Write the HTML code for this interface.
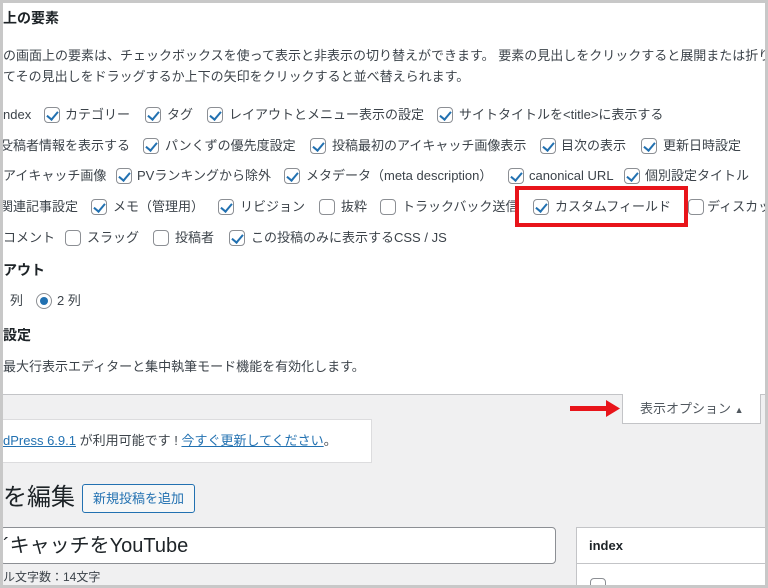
<!DOCTYPE html>
<html><head><meta charset="utf-8"><style>
*{margin:0;padding:0;box-sizing:border-box}
html,body{width:768px;height:588px;overflow:hidden;background:#f0f0f1}
body{font-family:"Liberation Sans","Noto Sans CJK JP",sans-serif;color:#3c434a;font-size:13px;position:relative}
.wrap{position:absolute;left:0;top:0;width:768px;height:588px;overflow:hidden}
.frame{position:absolute;left:0;top:0;width:768px;height:588px;border:3px solid #c8c8c8;pointer-events:none;z-index:10}
.panel{position:absolute;left:0;top:0;width:768px;height:395px;background:#fff;border-bottom:1px solid #c3c4c7}
.t{position:absolute;white-space:nowrap;line-height:18px}
.b{font-weight:bold;font-size:14px;color:#1d2327}
.cb{position:absolute;width:16px;height:16px;border:1px solid #8c8f94;border-radius:4px;background:#fff}
.cb.c::after{content:"";position:absolute;left:4px;top:1px;width:5px;height:9px;border:solid #2271b1;border-width:0 2px 2px 0;transform:rotate(40deg)}
.red{position:absolute;left:515px;top:186px;width:173px;height:41px;border:4px solid #e8141a}
</style></head><body><div class="wrap">
<div class="panel"></div>
<div class="t b" style="left:3px;top:9px">上の要素</div>
<div class="t" style="left:3px;top:47px;width:765px;overflow:hidden">の画面上の要素は、チェックボックスを使って表示と非表示の切り替えができます。 要素の見出しをクリックすると展開または折り</div>
<div class="t" style="left:3px;top:68px">てその見出しをドラッグするか上下の矢印をクリックすると並べ替えられます。</div>

<div class="t" style="left:3px;top:106px">ndex</div>
<div class="cb c" style="left:44px;top:107px"></div><div class="t" style="left:65px;top:106px">カテゴリー</div>
<div class="cb c" style="left:145px;top:107px"></div><div class="t" style="left:167px;top:106px">タグ</div>
<div class="cb c" style="left:207px;top:107px"></div><div class="t" style="left:229px;top:106px">レイアウトとメニュー表示の設定</div>
<div class="cb c" style="left:437px;top:107px"></div><div class="t" style="left:459px;top:106px">サイトタイトルを&lt;title&gt;に表示する</div>

<div class="t" style="left:0px;top:137px">殳稿者情報を表示する</div>
<div class="cb c" style="left:143px;top:138px"></div><div class="t" style="left:165px;top:137px">パンくずの優先度設定</div>
<div class="cb c" style="left:310px;top:138px"></div><div class="t" style="left:332px;top:137px">投稿最初のアイキャッチ画像表示</div>
<div class="cb c" style="left:540px;top:138px"></div><div class="t" style="left:561px;top:137px">目次の表示</div>
<div class="cb c" style="left:641px;top:138px"></div><div class="t" style="left:663px;top:137px">更新日時設定</div>

<div class="t" style="left:3px;top:167px">アイキャッチ画像</div>
<div class="cb c" style="left:116px;top:168px"></div><div class="t" style="left:137px;top:167px">PVランキングから除外</div>
<div class="cb c" style="left:284px;top:168px"></div><div class="t" style="left:306px;top:167px">メタデータ（meta description）</div>
<div class="cb c" style="left:508px;top:168px"></div><div class="t" style="left:529px;top:167px">canonical URL</div>
<div class="cb c" style="left:624px;top:168px"></div><div class="t" style="left:645px;top:167px">個別設定タイトル</div>

<div class="t" style="left:0px;top:198px">関連記事設定</div>
<div class="cb c" style="left:91px;top:199px"></div><div class="t" style="left:113px;top:198px">メモ（管理用）</div>
<div class="cb c" style="left:218px;top:199px"></div><div class="t" style="left:240px;top:198px">リビジョン</div>
<div class="cb" style="left:319px;top:199px"></div><div class="t" style="left:341px;top:198px">抜粋</div>
<div class="cb" style="left:380px;top:199px"></div><div class="t" style="left:402px;top:198px;width:113px;overflow:hidden">トラックバック送信</div>
<div class="cb c" style="left:533px;top:199px"></div><div class="t" style="left:555px;top:198px">カスタムフィールド</div>
<div class="cb" style="left:688px;top:199px"></div><div class="t" style="left:707px;top:198px;width:61px;overflow:hidden">ディスカッション</div>
<div class="red"></div>

<div class="t" style="left:3px;top:229px">コメント</div>
<div class="cb" style="left:65px;top:230px"></div><div class="t" style="left:87px;top:229px">スラッグ</div>
<div class="cb" style="left:153px;top:230px"></div><div class="t" style="left:175px;top:229px">投稿者</div>
<div class="cb c" style="left:229px;top:230px"></div><div class="t" style="left:251px;top:229px">この投稿のみに表示するCSS / JS</div>

<div class="t b" style="left:3px;top:261px">アウト</div>
<div class="t" style="left:10px;top:292px">列</div>
<div style="position:absolute;left:36px;top:293px;width:16px;height:16px;border:1px solid #8c8f94;border-radius:50%;background:#fff"><div style="position:absolute;left:3px;top:3px;width:8px;height:8px;border-radius:50%;background:#2271b1"></div></div>
<div class="t" style="left:57px;top:292px">2 列</div>
<div class="t b" style="left:3px;top:326px">設定</div>
<div class="t" style="left:3px;top:358px">最大行表示エディターと集中執筆モード機能を有効化します。</div>

<div style="position:absolute;left:622px;top:394px;width:139px;height:30px;background:#fff;border:1px solid #c3c4c7;border-top:none"></div>
<div class="t" style="left:640px;top:400px;font-size:13px;color:#50575e">表示オプション <span style="font-size:9px">▲</span></div>
<svg style="position:absolute;left:570px;top:400px" width="52" height="18"><rect x="0" y="6" width="38" height="5" fill="#e8141a"/><polygon points="36,0 50,8.5 36,17" fill="#e8141a"/></svg>

<div style="position:absolute;left:0;top:419px;width:372px;height:44px;background:#fff;border:1px solid #dcdcde"></div>
<div class="t" style="left:3px;top:432px;color:#3c434a"><span style="color:#2271b1;text-decoration:underline">dPress 6.9.1</span> が利用可能です ! <span style="color:#2271b1;text-decoration:underline">今すぐ更新してください</span>。</div>

<div class="t" style="left:3px;top:482px;font-size:24px;line-height:32px;color:#1d2327">を編集</div>
<div style="position:absolute;left:82px;top:484px;width:113px;height:29px;border:1px solid #2271b1;border-radius:3px;background:#f6f7f7;color:#2271b1;font-size:13px;line-height:27px;text-align:center">新規投稿を追加</div>

<div style="position:absolute;left:0;top:527px;width:556px;height:37px;background:#fff;border:1px solid #8c8f94;border-radius:4px"></div>
<div class="t" style="left:3px;top:533px;font-size:20px;line-height:26px;color:#1d2327">´キャッチをYouTube</div>
<div class="t" style="left:3px;top:568px;font-size:12px">ル文字数：14文字</div>

<div style="position:absolute;left:576px;top:527px;width:192px;height:61px;background:#fff;border:1px solid #c3c4c7;border-right:none;border-bottom:none"></div>
<div style="position:absolute;left:577px;top:563px;width:191px;height:1px;background:#c3c4c7"></div>
<div class="t" style="left:589px;top:537px;font-size:13px;color:#1d2327;font-weight:bold">index</div>
<div class="cb" style="left:590px;top:578px"></div>
<div class="frame"></div>
</div></body></html>
